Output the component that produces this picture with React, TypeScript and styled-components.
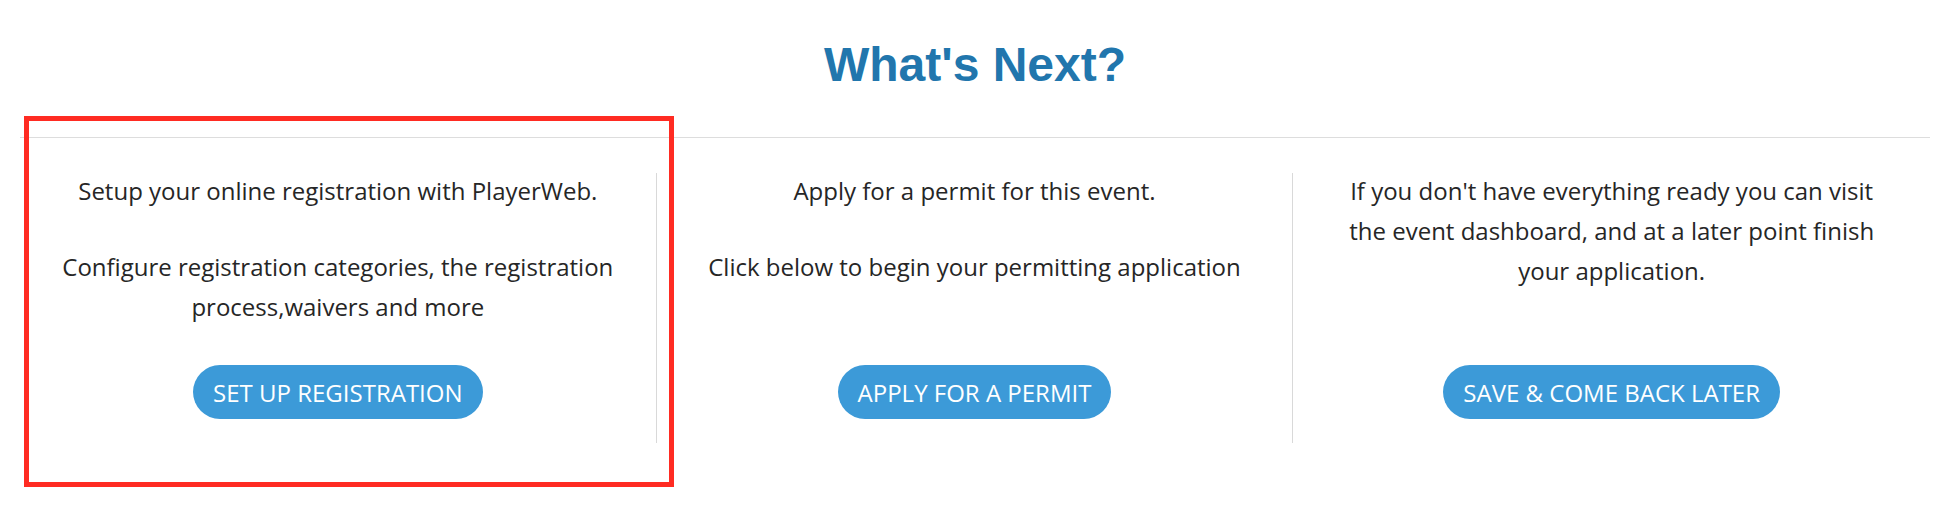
import React from 'react';
import styled, { createGlobalStyle } from 'styled-components';

const GlobalStyle = createGlobalStyle`
  * {
    box-sizing: border-box;
  }
  body {
    margin: 0;
    background: #ffffff;
    font-family: 'Open Sans', 'Noto Sans', sans-serif;
    color: #262626;
  }
`;

const Page = styled.div`
  position: relative;
  width: 1950px;
  height: 532px;
  padding: 37px 20px 0;
`;

const Title = styled.h1`
  margin: 0 0 45px;
  font-family: 'Liberation Sans', Arial, sans-serif;
  font-size: 48px;
  line-height: 55px;
  font-weight: 700;
  text-align: center;
  color: #2176ad;
`;

const Steps = styled.div`
  display: grid;
  grid-template-columns: repeat(3, 1fr);
  border-top: 1px solid #dddddd;
  padding-top: 35px;
`;

const Step = styled.div<{ $divider?: boolean }>`
  display: flex;
  flex-direction: column;
  align-items: center;
  height: 270px;
  padding: 0 40px 24px;
  border-right: ${(p) => (p.$divider ? '1px solid #d9d9d9' : 'none')};
  text-align: center;
`;

const Text = styled.p`
  margin: 0 0 36px;
  font-size: 24px;
  line-height: 40px;
  color: #262626;

  &:first-child {
    margin-top: -2px;
  }
`;

const ActionButton = styled.button`
  margin-top: auto;
  height: 54px;
  padding: 0 20px;
  border: none;
  border-radius: 27px;
  background: #3c9ad8;
  color: #ffffff;
  font-family: 'Open Sans', 'Noto Sans', sans-serif;
  font-size: 24px;
  text-transform: uppercase;
  cursor: pointer;
`;

// review annotation drawn over the first step
const Highlight = styled.div`
  position: absolute;
  left: 24px;
  top: 116px;
  width: 650px;
  height: 371px;
  border: 5px solid #ff2b22;
  pointer-events: none;
`;

const steps = [
  {
    id: 'registration',
    paragraphs: [
      'Setup your online registration with PlayerWeb.',
      'Configure registration categories, the registration process,waivers and more',
    ],
    action: 'Set up registration',
  },
  {
    id: 'permit',
    paragraphs: [
      'Apply for a permit for this event.',
      'Click below to begin your permitting application',
    ],
    action: 'Apply for a permit',
  },
  {
    id: 'later',
    paragraphs: [
      "If you don't have everything ready you can visit the event dashboard, and at a later point finish your application.",
    ],
    action: 'Save & come back later',
  },
];

export default function App() {
  return (
    <>
      <GlobalStyle />
      <Page>
        <Title>What's Next?</Title>
        <Steps>
          {steps.map((step, i) => (
            <Step key={step.id} $divider={i < steps.length - 1}>
              {step.paragraphs.map((text) => (
                <Text key={text}>{text}</Text>
              ))}
              <ActionButton>{step.action}</ActionButton>
            </Step>
          ))}
        </Steps>
        <Highlight />
      </Page>
    </>
  );
}
